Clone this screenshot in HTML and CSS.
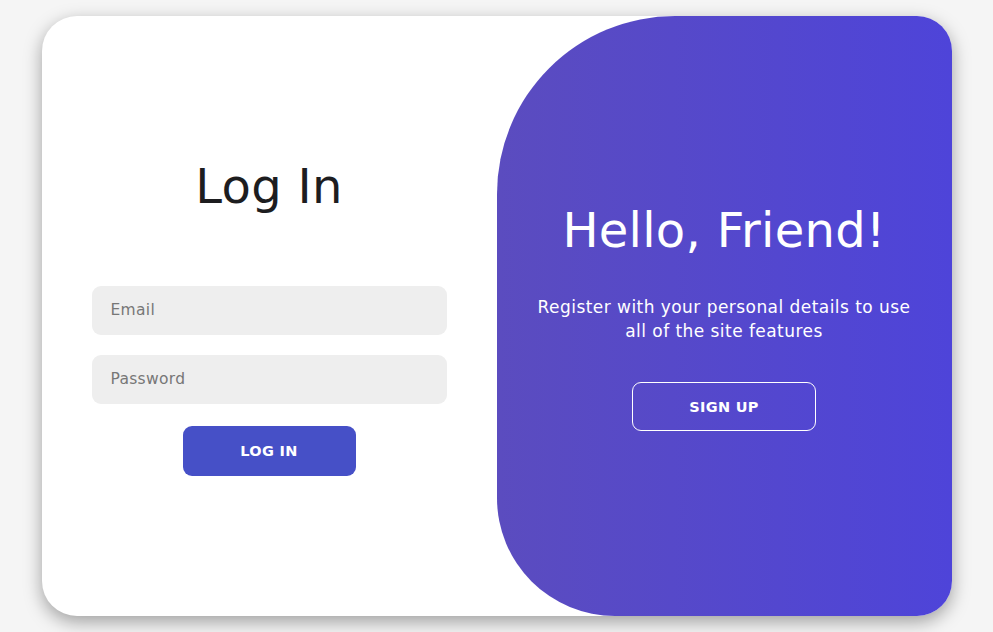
FILE: index.html
```html
<!DOCTYPE html>
<html lang="en">
<head>
<meta charset="utf-8">
<title>Log In</title>
<link rel="stylesheet" href="styles.css">
</head>
<body>
  <div class="container">
    <form class="form-panel">
      <h1 class="title">Log In</h1>
      <input class="field" type="email" placeholder="Email">
      <input class="field field-second" type="password" placeholder="Password">
      <button class="btn btn-primary" type="button">Log In</button>
    </form>
    <div class="toggle-panel">
      <h1 class="title title-light">Hello, Friend!</h1>
      <p class="lead">Register with your personal details to use<br>all of the site features</p>
      <button class="btn btn-ghost" type="button">Sign Up</button>
    </div>
  </div>
</body>
</html>
```
FILE: styles.css
```css
* {
  box-sizing: border-box;
}

html, body {
  margin: 0;
  padding: 0;
}

body {
  height: 100vh;
  background: #f5f5f5;
  display: flex;
  align-items: center;
  justify-content: center;
  font-family: "DejaVu Sans", "Noto Sans", sans-serif;
}

.container {
  width: 910px;
  height: 600px;
  background: #ffffff;
  border-radius: 35px;
  box-shadow: 0 6px 18px rgba(0, 0, 0, 0.35);
  overflow: hidden;
  display: flex;
}

.form-panel {
  width: 50%;
  margin: 0;
  padding: 0 50px;
  display: flex;
  flex-direction: column;
  align-items: center;
  justify-content: center;
}

.title {
  margin: 0;
  font-size: 48px;
  line-height: 58px;
  font-weight: 400;
  color: #1d1d1f;
  letter-spacing: 0.3px;
}

.form-panel .title {
  margin-bottom: 71px;
}

.title-light {
  color: #ffffff;
}

.field {
  width: 100%;
  height: 49px;
  border: none;
  outline: none;
  background: #eeeeee;
  border-radius: 9px;
  padding: 0 19px;
  font-family: inherit;
  font-size: 15.5px;
  letter-spacing: 0.3px;
  color: #333;
}

.field::placeholder {
  color: #777777;
}

.field-second {
  margin-top: 20px;
}

.btn {
  height: 50px;
  border-radius: 9px;
  font-family: inherit;
  font-size: 14.5px;
  font-weight: 700;
  letter-spacing: 0.3px;
  text-transform: uppercase;
  color: #ffffff;
  cursor: pointer;
}

.btn-primary {
  width: 173px;
  margin-top: 22px;
  border: 1px solid transparent;
  background: #4650c7;
}

.toggle-panel {
  width: 50%;
  padding: 0 30px;
  border-radius: 178px 0 0 118px;
  background: linear-gradient(to right, #5b4cbf, #4e44d9);
  display: flex;
  flex-direction: column;
  align-items: center;
  justify-content: center;
  text-align: center;
  color: #ffffff;
}

.lead {
  margin: 36px 0 39px;
  font-size: 17px;
  line-height: 24px;
  letter-spacing: 0.45px;
}

.btn-ghost {
  width: 184px;
  height: 49px;
  background: transparent;
  border: 1px solid #ffffff;
}
```
